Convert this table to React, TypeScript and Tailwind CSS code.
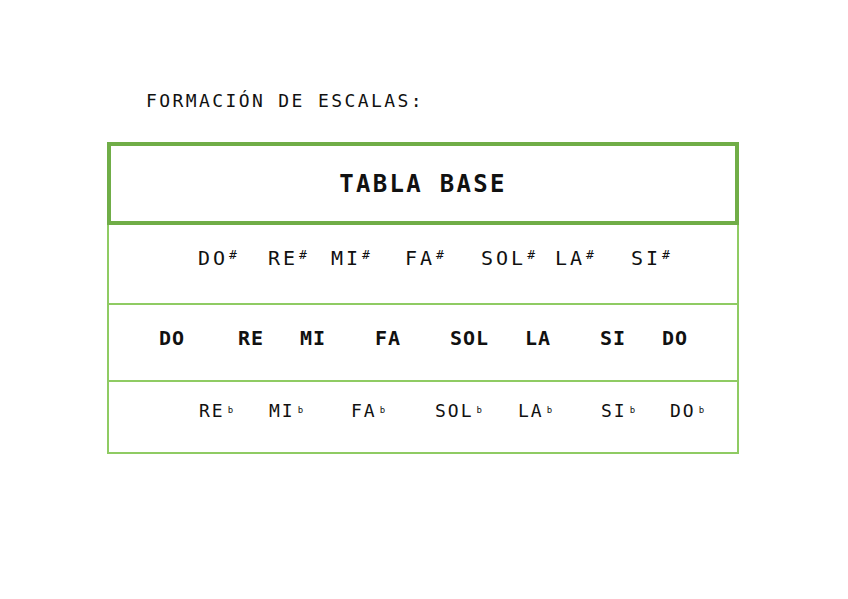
import React from "react";

const mono = { fontFamily: '"DejaVu Sans Mono", monospace' };

function Sharp({ n }: { n: string }) {
  return (
    <span className="whitespace-nowrap">
      {n}
      <span className="relative -top-[6px] ml-[1px] text-[13px] tracking-normal">#</span>
    </span>
  );
}

function Flat({ n }: { n: string }) {
  return (
    <span className="whitespace-nowrap">
      {n}
      <span className="relative -top-[4px] ml-[3px] text-[9px] tracking-normal">b</span>
    </span>
  );
}

export default function App() {
  return (
    <div className="w-[848px] h-[599px] bg-white text-[#111]" style={mono}>
      <div className="pt-[89px] pl-[146px] text-[18px] leading-6 tracking-[2.4px]">
        FORMACIÓN DE ESCALAS:
      </div>
      <div className="ml-[107px] mt-[29px] w-[632px]">
        <div className="h-[83px] border-4 border-[#70ad47] flex items-center justify-center">
          <span className="text-[24px] font-bold tracking-[2.3px]">TABLA BASE</span>
        </div>
        <div className="h-[80px] border-x-2 border-b-2 border-[#8fcb63] flex items-start pt-[21px] pl-[89px] text-[20px] tracking-[3px] leading-6">
          <div className="w-[70px] shrink-0"><Sharp n="DO" /></div>
          <div className="w-[63px] shrink-0"><Sharp n="RE" /></div>
          <div className="w-[74px] shrink-0"><Sharp n="MI" /></div>
          <div className="w-[76px] shrink-0"><Sharp n="FA" /></div>
          <div className="w-[74px] shrink-0"><Sharp n="SOL" /></div>
          <div className="w-[76px] shrink-0"><Sharp n="LA" /></div>
          <div className="shrink-0"><Sharp n="SI" /></div>
        </div>
        <div className="h-[77px] border-x-2 border-b-2 border-[#8fcb63] flex items-start pt-[21px] pl-[50px] text-[20px] font-bold tracking-[1px] leading-6">
          <div className="w-[79px] shrink-0">DO</div>
          <div className="w-[62px] shrink-0">RE</div>
          <div className="w-[75px] shrink-0">MI</div>
          <div className="w-[75px] shrink-0">FA</div>
          <div className="w-[75px] shrink-0">SOL</div>
          <div className="w-[75px] shrink-0">LA</div>
          <div className="w-[62px] shrink-0">SI</div>
          <div className="shrink-0">DO</div>
        </div>
        <div className="h-[72px] border-x-2 border-b-2 border-[#8fcb63] flex items-start pt-[17px] pl-[90px] text-[18px] tracking-[2px] leading-6">
          <div className="w-[70px] shrink-0"><Flat n="RE" /></div>
          <div className="w-[82px] shrink-0"><Flat n="MI" /></div>
          <div className="w-[84px] shrink-0"><Flat n="FA" /></div>
          <div className="w-[83px] shrink-0"><Flat n="SOL" /></div>
          <div className="w-[83px] shrink-0"><Flat n="LA" /></div>
          <div className="w-[69px] shrink-0"><Flat n="SI" /></div>
          <div className="shrink-0"><Flat n="DO" /></div>
        </div>
      </div>
    </div>
  );
}
